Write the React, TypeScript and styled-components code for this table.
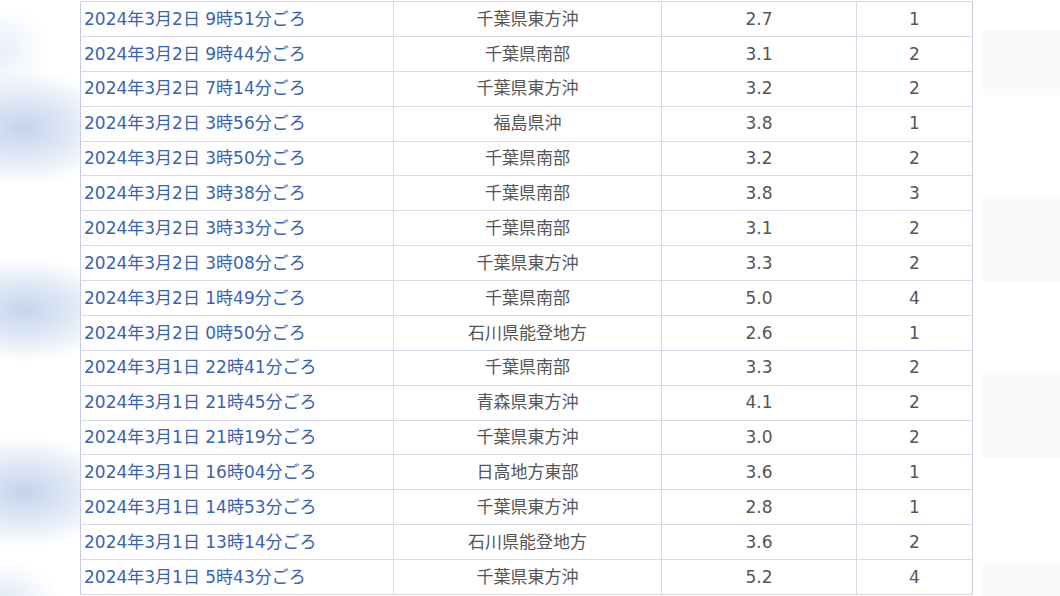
import styled, { createGlobalStyle } from "styled-components";

const GlobalStyle = createGlobalStyle`
  html, body {
    margin: 0;
    padding: 0;
    width: 1060px;
    height: 596px;
    overflow: hidden;
  }
  body {
    font-family: "DejaVu Sans", "Noto Sans CJK JP", sans-serif;
    background-color: #ffffff;
    background-image:
      radial-gradient(ellipse 95px 58px at 22px 128px, #c4d3ec 0%, rgba(205, 218, 240, 0.75) 40%, rgba(255, 255, 255, 0) 100%),
      radial-gradient(ellipse 95px 52px at 24px 310px, #c6d5ed 0%, rgba(205, 218, 240, 0.75) 40%, rgba(255, 255, 255, 0) 100%),
      radial-gradient(ellipse 95px 56px at 24px 492px, #c4d3ec 0%, rgba(205, 218, 240, 0.75) 40%, rgba(255, 255, 255, 0) 100%),
      radial-gradient(ellipse 50px 45px at 0px 50px, rgba(212, 223, 241, 0.5) 0%, rgba(255, 255, 255, 0) 100%),
      radial-gradient(ellipse 60px 40px at 0px 600px, rgba(205, 218, 240, 0.6) 0%, rgba(255, 255, 255, 0) 100%),
      linear-gradient(#f8f9fb, #f8f9fb),
      linear-gradient(#f8f9fb, #f8f9fb),
      linear-gradient(#f8f9fb, #f8f9fb),
      linear-gradient(#fafafc, #fafafc);
    background-repeat: no-repeat;
    background-size:
      auto, auto, auto, auto, auto,
      80px 85px, 80px 85px, 80px 40px, 80px 65px;
    background-position:
      0 0, 0 0, 0 0, 0 0, 0 0,
      983px 197px, 983px 373px, 983px 563px, 983px 30px;
  }
`;

const Page = styled.div`
  display: flex;
  padding: 1px 0 0 80px;
`;

const Table = styled.table`
  border-collapse: collapse;
  background: #ffffff;
  font-size: 17px;
  line-height: 1.2;
`;

const Cell = styled.td<{ $w: number; $link?: boolean }>`
  width: ${(p) => p.$w}px;
  height: 34.875px;
  padding: 0 3px;
  box-sizing: border-box;
  border: 1px solid #d7d8e8;
  text-align: ${(p) => (p.$link ? "left" : "center")};
  vertical-align: middle;
  white-space: nowrap;
  color: ${(p) => (p.$link ? "#3a62b3" : "#555555")};
  &:first-child {
    border-left-color: #c6cbe0;
  }
  &:last-child {
    border-right-color: #c9cbd8;
  }
`;

const DateLink = styled.a`
  color: inherit;
  text-decoration: none;
`;

type Quake = [string, string, string, string];

const rows: Quake[] = [
  ["2024年3月2日 9時51分ごろ", "千葉県東方沖", "2.7", "1"],
  ["2024年3月2日 9時44分ごろ", "千葉県南部", "3.1", "2"],
  ["2024年3月2日 7時14分ごろ", "千葉県東方沖", "3.2", "2"],
  ["2024年3月2日 3時56分ごろ", "福島県沖", "3.8", "1"],
  ["2024年3月2日 3時50分ごろ", "千葉県南部", "3.2", "2"],
  ["2024年3月2日 3時38分ごろ", "千葉県南部", "3.8", "3"],
  ["2024年3月2日 3時33分ごろ", "千葉県南部", "3.1", "2"],
  ["2024年3月2日 3時08分ごろ", "千葉県東方沖", "3.3", "2"],
  ["2024年3月2日 1時49分ごろ", "千葉県南部", "5.0", "4"],
  ["2024年3月2日 0時50分ごろ", "石川県能登地方", "2.6", "1"],
  ["2024年3月1日 22時41分ごろ", "千葉県南部", "3.3", "2"],
  ["2024年3月1日 21時45分ごろ", "青森県東方沖", "4.1", "2"],
  ["2024年3月1日 21時19分ごろ", "千葉県東方沖", "3.0", "2"],
  ["2024年3月1日 16時04分ごろ", "日高地方東部", "3.6", "1"],
  ["2024年3月1日 14時53分ごろ", "千葉県東方沖", "2.8", "1"],
  ["2024年3月1日 13時14分ごろ", "石川県能登地方", "3.6", "2"],
  ["2024年3月1日 5時43分ごろ", "千葉県東方沖", "5.2", "4"],
];

export default function App() {
  return (
    <>
      <GlobalStyle />
      <Page>
        <Table>
          <tbody>
            {rows.map(([time, place, mag, shindo]) => (
              <tr key={time}>
                <Cell $w={313} $link>
                  <DateLink href="#">{time}</DateLink>
                </Cell>
                <Cell $w={268}>{place}</Cell>
                <Cell $w={195}>{mag}</Cell>
                <Cell $w={116}>{shindo}</Cell>
              </tr>
            ))}
          </tbody>
        </Table>
      </Page>
    </>
  );
}
